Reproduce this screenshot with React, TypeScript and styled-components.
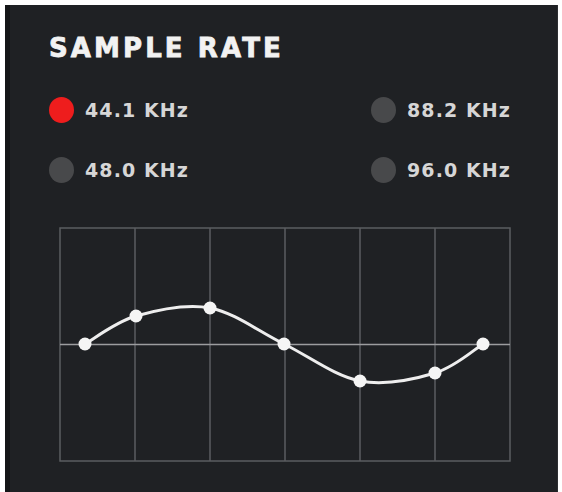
import React from "react";
import styled, { createGlobalStyle } from "styled-components";

const GlobalStyle = createGlobalStyle`
  html, body {
    margin: 0;
    padding: 0;
    background: #ffffff;
  }
  #root {
    width: 562px;
    height: 492px;
    overflow: hidden;
  }
`;

const Panel = styled.section`
  box-sizing: border-box;
  margin: 5px 4px 0 5px;
  width: 553px;
  height: 500px;
  background: #1f2124;
  border-left: 5px solid #141517;
  border-right: 1px solid #2c2e31;
  padding: 28px 0 0 39px;
  font-family: "DejaVu Sans", "Liberation Sans", sans-serif;
`;

const Title = styled.h2`
  margin: 0;
  height: 30px;
  line-height: 30px;
  font-size: 26px;
  font-weight: 700;
  color: #f2f2f2;
  letter-spacing: 3.1px;
  -webkit-text-stroke: 0.8px #f2f2f2;
`;

const Options = styled.div`
  margin-top: 32px;
  width: 462px;
  display: grid;
  grid-template-columns: 1fr auto;
  row-gap: 30px;
`;

const Option = styled.label`
  display: flex;
  align-items: center;
  gap: 11px;
  height: 30px;
`;

const Dot = styled.span<{ $active?: boolean }>`
  width: 25px;
  height: 26px;
  border-radius: 50%;
  background: ${(p) => (p.$active ? "#ee1d1d" : "#48494b")};
  flex: none;
`;

const Label = styled.span`
  font-size: 19px;
  font-weight: 700;
  color: #d6d6d6;
  letter-spacing: 1.1px;
  line-height: 30px;
`;

const ChartWrap = styled.div`
  margin: 42px 0 0 10px;
  width: 452px;
  height: 236px;
`;

const points: [number, number][] = [
  [86, 343],
  [137, 315],
  [211, 307],
  [285, 343],
  [361, 380],
  [436, 372],
  [484, 343],
];

function splinePath(pts: [number, number][]): string {
  let d = `M${pts[0][0]},${pts[0][1]}`;
  for (let i = 0; i < pts.length - 1; i++) {
    const p0 = pts[Math.max(i - 1, 0)];
    const p1 = pts[i];
    const p2 = pts[i + 1];
    const p3 = pts[Math.min(i + 2, pts.length - 1)];
    const c1x = p1[0] + (p2[0] - p0[0]) / 6;
    const c1y = p1[1] + (p2[1] - p0[1]) / 6;
    const c2x = p2[0] - (p3[0] - p1[0]) / 6;
    const c2y = p2[1] - (p3[1] - p1[1]) / 6;
    d += ` C${c1x.toFixed(1)},${c1y.toFixed(1)} ${c2x.toFixed(1)},${c2y.toFixed(1)} ${p2[0]},${p2[1]}`;
  }
  return d;
}

const Chart: React.FC = () => {
  const cols = [136, 211, 286, 361, 436];
  return (
    <svg width="452" height="236" viewBox="60 226 452 236">
      <rect x="61" y="227" width="450" height="233" fill="none" stroke="#5b5d60" strokeWidth="1.5" />
      {cols.map((x) => (
        <line key={x} x1={x} y1="227" x2={x} y2="460" stroke="#5b5d60" strokeWidth="1.5" />
      ))}
      <line x1="61" y1="343.5" x2="511" y2="343.5" stroke="#9c9d9f" strokeWidth="1.5" />
      <path d={splinePath(points)} fill="none" stroke="#eeeeee" strokeWidth="3" strokeLinecap="round" />
      {points.map(([x, y]) => (
        <circle key={x} cx={x} cy={y} r="6.5" fill="#f5f5f5" />
      ))}
    </svg>
  );
};

const rates = [
  { label: "44.1 KHz", active: true },
  { label: "88.2 KHz", active: false },
  { label: "48.0 KHz", active: false },
  { label: "96.0 KHz", active: false },
];

export default function App() {
  return (
    <>
      <GlobalStyle />
      <Panel>
        <Title>SAMPLE RATE</Title>
        <Options>
          {rates.map((r) => (
            <Option key={r.label}>
              <Dot $active={r.active} />
              <Label>{r.label}</Label>
            </Option>
          ))}
        </Options>
        <ChartWrap>
          <Chart />
        </ChartWrap>
      </Panel>
    </>
  );
}
